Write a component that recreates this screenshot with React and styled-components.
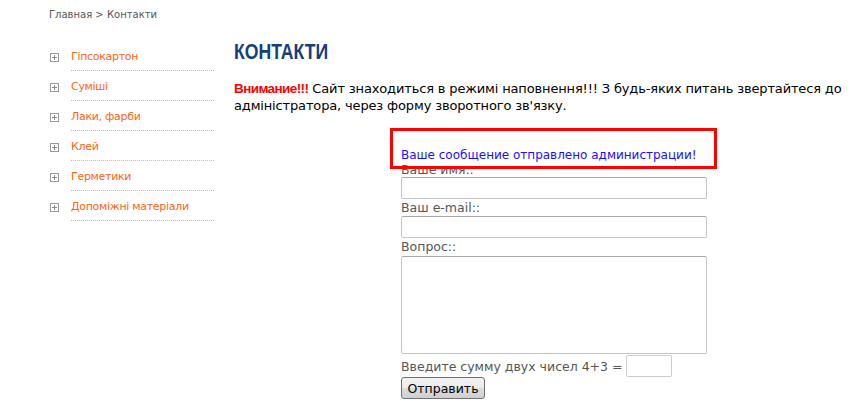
import styled, {createGlobalStyle} from 'styled-components'

const GlobalStyle = createGlobalStyle`
  body {
    margin: 0;
    background: #fff;
    font-family: "DejaVu Sans", Verdana, sans-serif;
  }
`

const Page = styled.div`
  width: 863px;
  height: 407px;
  overflow: hidden;
  padding-left: 49px;
  box-sizing: border-box;
`

const Breadcrumb = styled.div`
  height: 34px;
  padding-top: 8px;
  box-sizing: border-box;
  font-size: 10px;
  line-height: 14px;
  color: #555;
`

const Columns = styled.div`
  display: flex;
  gap: 20px;
`

const Sidebar = styled.ul`
  list-style: none;
  margin: 15px 0 0;
  padding: 0;
  width: 165px;
`

const MenuItem = styled.li`
  display: flex;
  align-items: flex-start;
  height: 30px;
`

const PlusBox = styled.span`
  width: 9px;
  height: 9px;
  margin: 4px 12px 0 1px;
  flex-shrink: 0;
  box-sizing: border-box;
  border: 1px solid #999;
  position: relative;
  &::before,
  &::after {
    content: '';
    position: absolute;
    background: #888;
  }
  &::before {
    left: 1px;
    right: 1px;
    top: 3px;
    height: 1px;
  }
  &::after {
    top: 1px;
    bottom: 1px;
    left: 3px;
    width: 1px;
  }
`

const MenuLink = styled.a`
  flex: 1;
  font-size: 11px;
  letter-spacing: -0.3px;
  line-height: 16px;
  color: #ff6414;
  text-decoration: none;
  padding-bottom: 5px;
  border-bottom: 1px dotted #bbb;
`

const Content = styled.div`
  width: 620px;
`

const Title = styled.h1`
  margin: 0;
  padding-top: 6px;
  height: 40px;
  font-family: "Liberation Sans", Arial, sans-serif;
  font-size: 22px;
  line-height: 24px;
  font-weight: bold;
  color: #173d7c;
  span {
    display: inline-block;
    transform: scaleX(0.8);
    transform-origin: left center;
  }
`

const Notice = styled.p`
  margin: 0;
  font-size: 13px;
  letter-spacing: -0.15px;
  line-height: 17px;
  color: #000;
`

const Warn = styled.b`
  font-family: "Liberation Sans", Arial, sans-serif;
  font-size: 13.5px;
  letter-spacing: -0.6px;
  color: #f00;
`

const FormWrap = styled.form`
  position: relative;
  margin: 34px 0 0 167px;
  width: 306px;
  font-size: 12.5px;
  color: #555;
`

const Highlight = styled.div`
  position: absolute;
  left: -11px;
  top: -20px;
  width: 327px;
  height: 41px;
  box-sizing: border-box;
  border: 3px solid #f00;
  pointer-events: none;
`

const Message = styled.div`
  color: #1a0dff;
  font-size: 12px;
  line-height: 14px;
  white-space: nowrap;
`

const Label = styled.div`
  line-height: 16px;
  height: ${p => p.$h || 16}px;
`

const TextInput = styled.input`
  display: block;
  width: 306px;
  height: 22px;
  box-sizing: border-box;
  border: 1px solid #c4c4c4;
  border-top-color: #a8a8a8;
  border-radius: 2px;
  margin: 0 0 1px;
`

const TextArea = styled.textarea`
  display: block;
  width: 306px;
  height: 98px;
  box-sizing: border-box;
  border: 1px solid #c4c4c4;
  border-top-color: #a8a8a8;
  border-radius: 2px;
  resize: none;
  margin: 0;
`

const CaptchaRow = styled.div`
  display: flex;
  align-items: center;
  gap: 4px;
  margin-top: 1px;
  height: 22px;
`

const SmallInput = styled.input`
  width: 46px;
  height: 22px;
  box-sizing: border-box;
  border: 1px solid #ccc;
  border-radius: 2px;
`

const Submit = styled.button`
  display: block;
  margin-top: 0;
  width: 84px;
  height: 22px;
  padding: 0;
  font-family: inherit;
  font-size: 12.5px;
  color: #000;
  border: 1px solid #707070;
  border-radius: 3px;
  background: linear-gradient(#f2f2f2, #ebebeb 50%, #dddddd 50%, #cfcfcf);
`

const menu = ['Гіпсокартон', 'Суміші', 'Лаки, фарби', 'Клей', 'Герметики', 'Допоміжні матеріали']

export default function App() {
    return (
        <Page>
            <GlobalStyle/>
            <Breadcrumb>Главная &gt; Контакти</Breadcrumb>
            <Columns>
                <Sidebar>
                    {menu.map(item => (
                        <MenuItem key={item}>
                            <PlusBox/>
                            <MenuLink href="#">{item}</MenuLink>
                        </MenuItem>
                    ))}
                </Sidebar>
                <Content>
                    <Title><span>КОНТАКТИ</span></Title>
                    <Notice>
                        <Warn>Внимание!!!</Warn> Сайт знаходиться в режимі наповнення!!! З будь-яких питань звертайтеся до адміністратора, через форму зворотного зв'язку.
                    </Notice>
                    <FormWrap onSubmit={e => e.preventDefault()}>
                        <Highlight/>
                        <Message>Ваше сообщение отправлено администрации!</Message>
                        <Label $h={15}>Ваше имя::</Label>
                        <TextInput type="text"/>
                        <Label>Ваш e-mail::</Label>
                        <TextInput type="text"/>
                        <Label $h={17}>Вопрос::</Label>
                        <TextArea/>
                        <CaptchaRow>
                            Введите сумму двух чисел 4+3 = <SmallInput type="text"/>
                        </CaptchaRow>
                        <Submit type="submit">Отправить</Submit>
                    </FormWrap>
                </Content>
            </Columns>
        </Page>
    )
}
